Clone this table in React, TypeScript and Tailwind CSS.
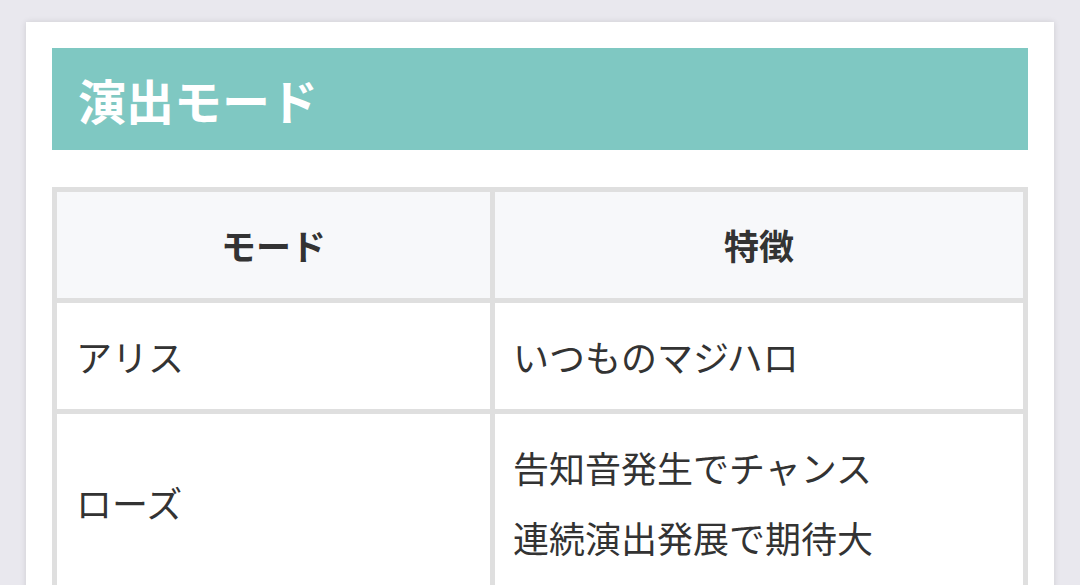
import React from 'react'

const rows = [
  { mode: 'アリス', notes: ['いつものマジハロ'] },
  { mode: 'ローズ', notes: ['告知音発生でチャンス', '連続演出発展で期待大'] },
]

const App = () => {
  return (
    <div
      className="h-[585px] overflow-hidden bg-[#e9e8ee] pt-[22px] pl-[26px] pr-[26px]"
      style={{ fontFamily: '"Noto Sans CJK JP", "Noto Sans", sans-serif' }}
    >
      <div className="bg-white shadow-[0_0_6px_rgba(0,0,0,0.12)] px-[26px] pt-[26px] pb-10 h-[700px]">
        <h2 className="bg-[#7fc8c2] h-[102px] flex items-center pl-[26px] text-white text-[48px] font-bold leading-none">
          演出モード
        </h2>
        <div className="mt-[37px] grid grid-cols-[433px_528px] gap-[5px] p-[5px] bg-[#dfdfdf] text-[#333] text-[36px] leading-[70px]">
          <div className="bg-[#f7f8fa] py-[18px] text-center font-bold text-[35px]">モード</div>
          <div className="bg-[#f7f8fa] py-[18px] text-center font-bold text-[35px]">特徴</div>
          {rows.map((r) => (
            <React.Fragment key={r.mode}>
              <div className="bg-white py-[18px] px-[19px] flex items-center">{r.mode}</div>
              <div className="bg-white py-[18px] px-[18px]">
                {r.notes.map((n) => (
                  <div key={n}>{n}</div>
                ))}
              </div>
            </React.Fragment>
          ))}
        </div>
      </div>
    </div>
  )
}

export default App
